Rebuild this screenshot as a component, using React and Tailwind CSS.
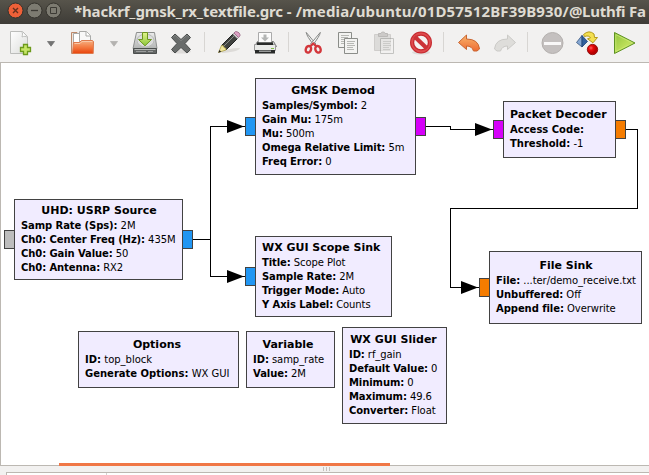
import React from "react";

const BLOCKS = [
  { title: "UHD: USRP Source", box: "left-[14px] top-[136px] w-[169px] h-[81px] pt-[3px]", shift: "pr-0", tracking: "tracking-[-0.09px]",
    rows: [["Samp Rate (Sps):", "2M"], ["Ch0: Center Freq (Hz):", "435M"], ["Ch0: Gain Value:", "50"], ["Ch0: Antenna:", "RX2"]] },
  { title: "GMSK Demod", box: "left-[255px] top-[15px] w-[161px] h-[97px] pt-[4px]", shift: "pr-[6px]", tracking: "tracking-[-0.09px]",
    rows: [["Samples/Symbol:", "2"], ["Gain Mu:", "175m"], ["Mu:", "500m"], ["Omega Relative Limit:", "5m"], ["Freq Error:", "0"]] },
  { title: "WX GUI Scope Sink", box: "left-[255px] top-[173px] w-[137px] h-[81px] pt-[3px]", shift: "pr-[6px]", tracking: "tracking-[-0.09px]",
    rows: [["Title:", "Scope Plot"], ["Sample Rate:", "2M"], ["Trigger Mode:", "Auto"], ["Y Axis Label:", "Counts"]] },
  { title: "Packet Decoder", box: "left-[503px] top-[38px] w-[113px] h-[57px] pt-[5px]", shift: "pr-[4px]", tracking: "tracking-normal",
    rows: [["Access Code:", ""], ["Threshold:", "-1"]] },
  { title: "File Sink", box: "left-[489px] top-[188px] w-[153px] h-[73px] pt-[6px]", shift: "pr-0", tracking: "tracking-[-0.06px]",
    rows: [["File:", "...ter/demo_receive.txt"], ["Unbuffered:", "Off"], ["Append file:", "Overwrite"]] },
  { title: "Options", box: "left-[78px] top-[268px] w-[161px] h-[57px] pt-[5px]", shift: "pr-[4px]", tracking: "tracking-normal",
    rows: [["ID:", "top_block"], ["Generate Options:", "WX GUI"]] },
  { title: "Variable", box: "left-[246px] top-[268px] w-[89px] h-[57px] pt-[5px]", shift: "pr-[6px]", tracking: "tracking-[-0.06px]",
    rows: [["ID:", "samp_rate"], ["Value:", "2M"]] },
  { title: "WX GUI Slider", box: "left-[342px] top-[264px] w-[105px] h-[97px] pt-[4px]", shift: "pr-[3px]", tracking: "tracking-[-0.09px]",
    rows: [["ID:", "rf_gain"], ["Default Value:", "0"], ["Minimum:", "0"], ["Maximum:", "49.6"], ["Converter:", "Float"]] },
];

const PORTS = [
  "left-[4px] top-[167px] bg-[#bdbdbd]",
  "left-[182px] top-[167px] bg-[#2196f3]",
  "left-[245px] top-[54px] bg-[#2196f3]",
  "left-[415px] top-[54px] bg-[#d500f9]",
  "left-[245px] top-[204px] bg-[#2196f3]",
  "left-[493px] top-[57px] bg-[#d500f9]",
  "left-[615px] top-[57px] bg-[#f57c00]",
  "left-[479px] top-[215px] bg-[#f57c00]",
];

function Block({ title, box, shift, tracking, rows }) {
  return (
    <div className={`absolute border border-[#424242] bg-[#f1ecff] pl-[6px] pr-[5px] whitespace-nowrap text-black ${box}`}>
      <div className={`h-[16px] text-center text-[11px] font-bold leading-[16px] ${shift}`}>{title}</div>
      {rows.map(([k, v]) => (
        <div key={k} className={`h-[14px] text-[10px] leading-[14px] ${tracking}`}>
          <b>{k}</b> {v}
        </div>
      ))}
    </div>
  );
}

function Wires() {
  return (
    <svg className="absolute left-0 top-0" width="649" height="402" viewBox="0 63 649 402">
      <g fill="none" stroke="#000" shapeRendering="crispEdges">
        <path d="M193 239.5H210.5M245 126.5H210.5V276.5H245" />
        <path d="M426 126.5H450.5V129.5H493" />
        <path d="M626 129.5H637.5V208.5H450.5V287.5H479" />
      </g>
      <path d="M227 120L244 126.5L227 133ZM227 270L244 276.5L227 283ZM475 123L492 129.5L475 136ZM461 281L478 287.5L461 294Z" />
    </svg>
  );
}

function Icon({ className = "", children }) {
  return <svg className={`shrink-0 ${className}`} width="26" height="26" viewBox="0 0 26 26">{children}</svg>;
}

const Sep = ({ className }) => <div className={`mb-[2px] h-5 w-px shrink-0 bg-[#d8d6d3] ${className}`} />;

function Arrow({ color, className }) {
  return (
    <svg className={`mt-[2px] shrink-0 ${className}`} width="8" height="6" viewBox="0 0 8 6">
      <path d="M.5 .5H7.5L4 5.2Z" fill={color} stroke={color} strokeWidth=".8" />
    </svg>
  );
}

function Page({ x, y, faded }) {
  return (
    <g transform={`translate(${x} ${y})`} opacity={faded ? 0.45 : 1}>
      <path d="M.5 .5H13.5V15.5H.5Z" fill="#f3f3f1" stroke="#8b8d89" />
      <path d="M3 3.5H11M3 5.5H10M3 7.5H11M3 9.5H9M3 11.5H10" stroke="#b7b8b4" />
    </g>
  );
}

function Toolbar() {
  return (
    <div className="flex h-[38px] shrink-0 items-center bg-[#f2f1f0]">
      <svg width="0" height="0" className="absolute">
        <defs>
          <linearGradient id="paper" x2="1" y2="1"><stop stopColor="#fff" /><stop offset="1" stopColor="#dcdddb" /></linearGradient>
          <linearGradient id="folder" x2="0" y2="1"><stop stopColor="#f6b183" /><stop offset=".5" stopColor="#f47c43" /><stop offset="1" stopColor="#e8440c" /></linearGradient>
          <linearGradient id="metal" x2="0" y2="1"><stop stopColor="#ececec" /><stop offset="1" stopColor="#b3b5b4" /></linearGradient>
          <linearGradient id="green" x2="0" y2="1"><stop stopColor="#e2f58c" /><stop offset="1" stopColor="#8cc63a" /></linearGradient>
          <linearGradient id="play" x2="1" y2="1"><stop stopColor="#8fc33c" /><stop offset=".6" stopColor="#bfe05b" /><stop offset="1" stopColor="#72a52a" /></linearGradient>
          <linearGradient id="undo" x2="0" y2="1"><stop stopColor="#f9b56d" /><stop offset="1" stopColor="#ee6c33" /></linearGradient>
          <radialGradient id="ball" cx=".35" cy=".35"><stop stopColor="#ff6060" /><stop offset=".45" stopColor="#e80a0a" /><stop offset="1" stopColor="#b80000" /></radialGradient>
        </defs>
      </svg>
      {/* new */}
      <Icon className="ml-[8px]">
        <path d="M2.5 1.5H14.5L19.5 6.5V23.5H2.5Z" fill="url(#paper)" stroke="#bcbdbb" />
        <path d="M13.5 1.5C15 3 14.5 5 14 7C16 6 18 6 19.5 7.5" fill="#fff" stroke="#bcbdbb" />
        <path d="M15.5 14.5H19.5V17.5H22.5V21.5H19.5V24.5H15.5V21.5H12.5V17.5H15.5Z" fill="#c7e667" stroke="#6c9a1b" strokeWidth="1.3" />
      </Icon>
      <Arrow color="#737373" className="ml-[13px]" />
      {/* open */}
      <Icon className="ml-[14px]">
        <path d="M2.5 2.5H8V23.5H2.5Z" fill="#f3e4d8" stroke="#bc896b" />
        <path d="M4.5 14V3.5H11.5L14.5 6.5V14Z" fill="#fff" stroke="#aaaba9" />
        <path d="M10.5 14V1.5H17.5L21.5 5.5V14Z" fill="#f8f8f8" stroke="#aaaba9" />
        <path d="M17 1.5V6H21.5" fill="#fff" stroke="#aaaba9" />
        <path d="M4.5 12.5H10.5L12.5 10.5H23.5L24.5 11.5L24.2 23.5H3.5Z" fill="url(#folder)" stroke="#dd7a4d" />
        <path d="M5.5 13.5H11L13 11.5H23" fill="none" stroke="#f9c7a6" />
      </Icon>
      <Arrow color="#b4b2b0" className="ml-[15px]" />
      {/* save */}
      <Icon className="ml-[14px]">
        <path d="M4.5 2.5H22.5L25 18.5H1Z" fill="url(#metal)" stroke="#8d8f8e" />
        <ellipse cx="13.5" cy="10.5" rx="8.5" ry="6.5" fill="#dcdddc" stroke="#b9bbba" />
        <path d="M1.5 18.5H24.5V23.5H1.5Z" fill="#656867" stroke="#4b4e4d" />
        <path d="M2.5 19.5H23.5" stroke="#b5b7b6" /><path d="M4 21.5H14M16 21.5H21" stroke="#9b9d9c" />
        <path d="M10.5 2.5H15.5V9.5H19.5L13 15.8L6.5 9.5H10.5Z" fill="url(#green)" stroke="#6c961e" />
      </Icon>
      {/* close */}
      <Icon className="ml-[11px]">
        <ellipse cx="12" cy="21.5" rx="10" ry="2" fill="#dedcda" />
        <path d="M2.5 6L6 2.5L12 8L18 2.5L21.5 6L16 12L21.5 18L18 21.5L12 16L6 21.5L2.5 18L8 12Z" transform="translate(0 1.5)" fill="#696c6b" stroke="#4a4d4c" strokeLinejoin="round" />
        <path d="M4 7.5L6 5.2L12 10.8L18 5.2L20 7.5" fill="none" stroke="#858887" strokeWidth=".8" />
      </Icon>
      <Sep className="ml-[9px]" />
      {/* edit */}
      <Icon className="ml-[12px]">
        <path d="M4 23Q9 18 23 18Q22 22 4 23Z" fill="#dddbd8" />
        <path d="M4.5 15.5L16 4L20.5 8.5L9 20Z" fill="#40423f" stroke="#222" />
        <path d="M7 16L17.5 5.5" stroke="#8a8c88" />
        <path d="M1.5 22.5L4.5 15.5Q7 15 7 17.5Q9.5 18 9 20Z" fill="#f1e69c" stroke="#a89c47" strokeWidth=".8" />
        <path d="M1.3 22.7L2.5 20L4.2 21.7Z" fill="#222" />
        <path d="M15.8 4.2L17.2 2.8L21.7 7.3L20.3 8.7Z" fill="#d7d7d7" stroke="#777" strokeWidth=".5" />
        <path d="M17 3L18.5 1.5Q20 1.5 22 2.8Q23.3 4.3 23 5.8L21.5 7.5Z" fill="#dda0c4" stroke="#956582" strokeWidth=".8" />
      </Icon>
      {/* print */}
      <Icon className="ml-[10px]">
        <path d="M4.5 11.5H20.5L23.5 16.5H1.5Z" fill="#d8d9d7" stroke="#777" />
        <path d="M5.5 14V2.5H18.5V14Z" fill="#fcfcfc" stroke="#aaa" />
        <path d="M10.5 4.5H13.5V7.5H16L12 11.5L8 7.5H10.5Z" fill="#b3b5b4" />
        <path d="M4 13.5H20" stroke="#292b2a" strokeWidth="2.4" />
        <path d="M1.5 14.5H22.5V20.5H1.5Z" fill="#e9eae8" stroke="#999" />
        <path d="M4 14H20" stroke="#292b2a" strokeWidth="2" />
        <path d="M2 20H22V23.5H2Z" fill="#292b2a" /><path d="M6 20.5H18V22H6Z" fill="#989a99" />
        <path d="M18 18.5H21" stroke="#82bf4a" />
      </Icon>
      <Sep className="ml-[9px]" />
      {/* cut */}
      <Icon className="ml-[13px]">
        <path d="M4.2 2.4Q4.5 6 12.2 15.5L14 14.1Z" fill="#f4f4f3" stroke="#858785" />
        <path d="M18.3 2.4Q18 6 10.3 15.5L8.5 14.1Z" fill="#f4f4f3" stroke="#858785" />
        <g fill="none" stroke="#d3373b" strokeWidth="2.4">
          <ellipse cx="6.4" cy="19.3" rx="2.6" ry="3.4" transform="rotate(22 6.4 19.3)" />
          <ellipse cx="16" cy="19.3" rx="2.6" ry="3.4" transform="rotate(-22 16 19.3)" />
        </g>
        <path d="M8.3 16.3L11.2 13.5L14.2 16.3" fill="none" stroke="#d3373b" strokeWidth="2" />
      </Icon>
      {/* copy */}
      <Icon className="ml-[9px]"><Page x={1} y={2} /><Page x={7} y={8} /></Icon>
      {/* paste */}
      <Icon className="ml-[10px]">
        <path d="M1.5 4.5H17.5V20.5H1.5Z" fill="#dcdbd9" stroke="#cfcdcb" />
        <path d="M5.5 6.5V3.5H8Q8 2 10 2Q12 2 12 3.5H14.5V6.5Z" fill="#cccac8" stroke="#bbb9b7" />
        <Page x={7} y={8} faded />
      </Icon>
      {/* disable */}
      <Icon className="ml-[9px]">
        <ellipse cx="13" cy="22.5" rx="9" ry="2" fill="#dedcda" />
        <circle cx="13" cy="12.5" r="8.9" fill="#f4f2f1" stroke="#c62b30" strokeWidth="4.2" />
        <circle cx="13" cy="12.5" r="9" fill="none" stroke="#df4b4e" strokeWidth="1.8" />
        <path d="M6.5 6.5L19 18.5" stroke="#cc3338" strokeWidth="4.2" />
      </Icon>
      <Sep className="ml-[9px]" />
      {/* undo */}
      <Icon className="ml-[13px]">
        <path d="M1.5 12.5L9.5 5V9Q21.5 9 22.5 19L20 21H16.5Q15 16 9.5 16V19.5Z" fill="url(#undo)" stroke="#c96531" strokeLinejoin="round" />
      </Icon>
      {/* redo */}
      <Icon className="ml-[10px]">
        <path d="M22.5 12.5L14.5 5V9Q2.5 9 1.5 19L4 21H7.5Q9 16 14.5 16V19.5Z" fill="#deddda" stroke="#cbcac7" strokeLinejoin="round" />
      </Icon>
      <Sep className="ml-[8px]" />
      {/* stop */}
      <Icon className="ml-[12px]">
        <circle cx="12.5" cy="13" r="10.5" fill="#c4c0bf" stroke="#b4b0ae" />
        <path d="M4 12H21V15H4Z" fill="#f9f8f8" />
      </Icon>
      {/* generate */}
      <Icon className="ml-[10px]">
        <path d="M.5 12.5L6 5.5V17Z" fill="#87a8d3" stroke="#34537d" strokeWidth=".8" />
        <path d="M6 5.5L11.5 11.5L6 17Z" fill="#315f9c" stroke="#204173" strokeWidth=".8" />
        <path d="M7.5 4.5Q13-.5 18 4L18.5 7.5H21.5L17 12.8L11.5 8.8L14.5 7.8Q13 5 8.5 6.5Z" fill="#f3df50" stroke="#b49a1b" strokeLinejoin="round" />
        <circle cx="16.5" cy="19.5" r="5.2" fill="url(#ball)" stroke="#8e1010" strokeWidth=".9" />
      </Icon>
      {/* execute */}
      <Icon className="ml-[11px]">
        <path d="M1.5 2.5L22 13L1.5 23.5Z" fill="url(#play)" stroke="#5e9222" strokeLinejoin="round" />
        <path d="M2.8 4.6L19.6 13L2.8 21.4Z" fill="none" stroke="#d0ec7b" strokeWidth=".7" />
      </Icon>
    </div>
  );
}

function TitleBar() {
  return (
    <div className="flex h-6 shrink-0 items-center bg-linear-to-b from-[#57544b] to-[#3e3c37]">
      <svg className="shrink-0" width="74" height="24" viewBox="0 0 74 24">
        <circle cx="15.5" cy="10.5" r="7.5" fill="#ef6038" stroke="#34322c" />
        <path d="M13 8L18 13M18 8L13 13" stroke="#66301e" strokeWidth="1.4" />
        <circle cx="34.5" cy="10.5" r="7.5" fill="#7d7b71" stroke="#34322c" />
        <path d="M31 10.5H38" stroke="#3c3a34" strokeWidth="1.3" />
        <circle cx="53.5" cy="10.5" r="7.5" fill="#7d7b71" stroke="#34322c" />
        <path d="M50.5 7.5H56.5V13.5H50.5Z" fill="none" stroke="#3c3a34" />
      </svg>
      <span className="mb-[2px] whitespace-nowrap text-[15px] font-bold leading-5 text-[#dfdbd2] [font-family:'Noto_Sans','Open_Sans',sans-serif]">
        <span className="tracking-[-0.15px]">*hackrf_gmsk_rx_textfile.grc </span>
        <span className="tracking-[0.15px]">- /media/ubuntu/01D57512BF39B930/</span>
        <span className="tracking-[-0.25px]">@Luthfi Fa</span>
      </span>
    </div>
  );
}

export default function App() {
  return (
    <div className="flex h-[475px] w-[649px] flex-col overflow-hidden bg-[#f2f1f0] [font-family:'DejaVu_Sans',sans-serif]">
      <TitleBar />
      <Toolbar />
      <div className="h-px shrink-0 bg-[#bcb8b2]" />
      <main className="relative h-[402px] shrink-0 bg-white">
        <Wires />
        {PORTS.map((p) => <div key={p} className={`absolute h-[19px] w-[11px] border border-[#424242] ${p}`} />)}
        {BLOCKS.map((b) => <Block key={b.title} {...b} />)}
        <div className="absolute left-0 top-0 h-full w-px bg-[#bcb8b2]" />
        <div className="absolute left-[59px] top-[400px] z-10 h-[3px] w-[331px] bg-[#f07746]" />
      </main>
      <div className="h-px shrink-0 bg-[#bcb8b2]" />
      <div className="flex h-[6px] shrink-0 items-center gap-[2px] pl-[323px]">
        <i className="h-1 w-px bg-[#c4c1bd]" /><i className="h-1 w-px bg-[#c4c1bd]" /><i className="h-1 w-px bg-[#c4c1bd]" />
      </div>
      <div className="ml-[6px] flex h-[3px] shrink-0 border-l border-t border-[#bcb8b2] bg-white">
        <div className="w-[100px] border-r border-[#d5d3d0]" />
      </div>
    </div>
  );
}
